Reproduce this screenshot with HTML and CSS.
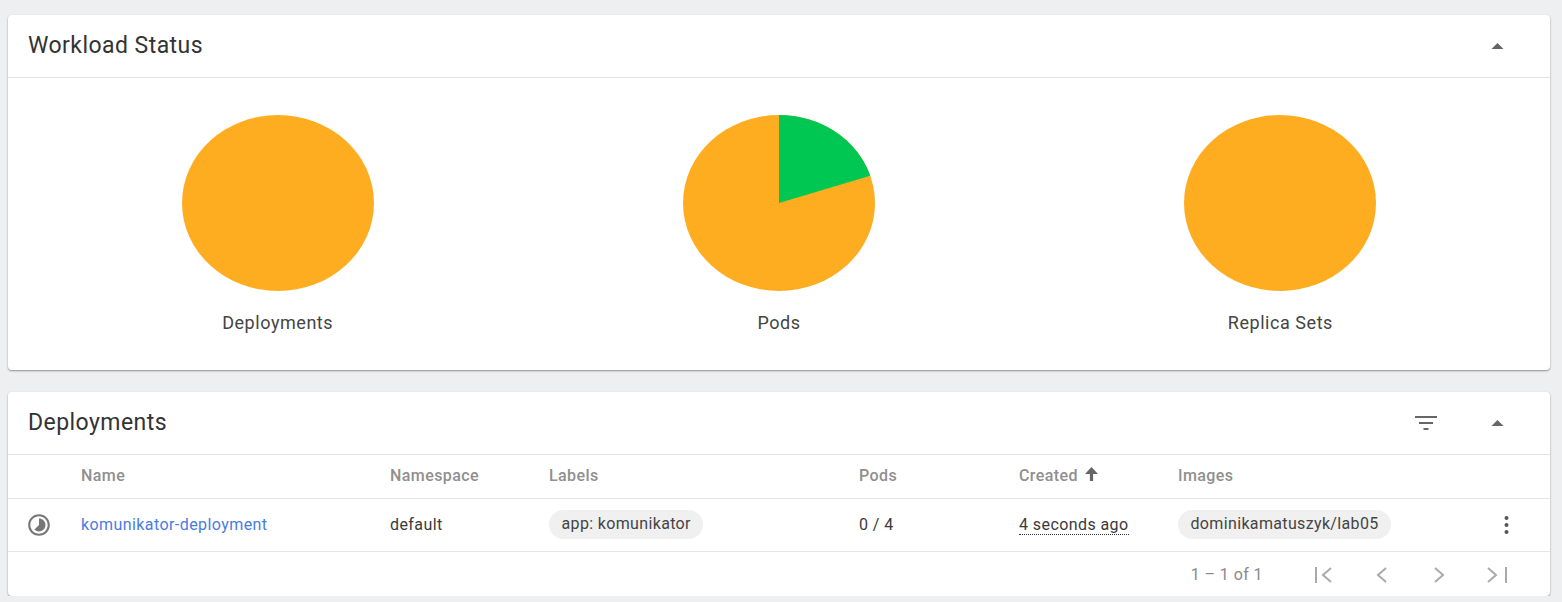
FILE: index.html
```html
<!DOCTYPE html>
<html lang="en">
<head>
    <meta charset="UTF-8">
    <meta name="viewport" content="width=device-width, initial-scale=1.0">
    <title>Workloads</title>
    <link rel="stylesheet" href="styles.css">
</head>
<body>
    <section class="card card-status">
        <header class="card-header">
            <h2 class="card-title">Workload Status</h2>
            <div class="card-actions">
                <svg class="icon-caret" viewBox="0 0 14 7"><path d="M7 0 14 7H0z"/></svg>
            </div>
        </header>
        <div class="charts">
            <figure class="chart">
                <svg class="pie" viewBox="-96 -88 192 176"><ellipse rx="96" ry="88" fill="#ffad20"/></svg>
                <figcaption class="chart-label">Deployments</figcaption>
            </figure>
            <figure class="chart">
                <svg class="pie" viewBox="-96 -88 192 176">
                    <ellipse rx="96" ry="88" fill="#ffad20"/>
                    <path d="M0 0V-88A96 88 0 0 1 91.3 -27.2Z" fill="#00c752"/>
                </svg>
                <figcaption class="chart-label">Pods</figcaption>
            </figure>
            <figure class="chart">
                <svg class="pie" viewBox="-96 -88 192 176"><ellipse rx="96" ry="88" fill="#ffad20"/></svg>
                <figcaption class="chart-label">Replica Sets</figcaption>
            </figure>
        </div>
    </section>

    <section class="card card-deployments">
        <header class="card-header">
            <h2 class="card-title">Deployments</h2>
            <div class="card-actions">
                <svg class="icon-filter" viewBox="0 0 22 14"><path d="M0 0h22v2H0zM4 6h14v2H4zM8.500 12h5v2h-5z"/></svg>
                <svg class="icon-caret" viewBox="0 0 14 7"><path d="M7 0 14 7H0z"/></svg>
            </div>
        </header>
        <table class="table">
            <colgroup>
                <col class="col-icon"><col class="col-name"><col class="col-ns"><col class="col-labels">
                <col class="col-pods"><col class="col-created"><col class="col-images"><col>
            </colgroup>
            <thead>
                <tr>
                    <th></th>
                    <th>Name</th>
                    <th>Namespace</th>
                    <th>Labels</th>
                    <th>Pods</th>
                    <th>Created <svg class="icon-sort" viewBox="0 0 12 13"><path d="M6 0 12 6.500H7.500V13h-3V6.500H0z"/></svg></th>
                    <th>Images</th>
                    <th></th>
                </tr>
            </thead>
            <tbody>
                <tr>
                    <td class="cell-icon">
                        <svg class="icon-status" viewBox="0 0 24 24">
                            <path d="M16.240 7.760C15.070 6.590 13.540 6 12 6v6l-4.240 4.240c2.340 2.340 6.140 2.340 8.490 0 2.340-2.340 2.340-6.140-.01-8.480zM12 2C6.480 2 2 6.480 2 12s4.480 10 10 10 10-4.480 10-10S17.520 2 12 2zm0 18c-4.420 0-8-3.580-8-8s3.580-8 8-8 8 3.580 8 8-3.580 8-8 8z"/>
                        </svg>
                    </td>
                    <td><a class="link" href="#">komunikator-deployment</a></td>
                    <td>default</td>
                    <td><span class="chip">app: komunikator</span></td>
                    <td>0 / 4</td>
                    <td><span class="age">4 seconds ago</span></td>
                    <td><span class="chip">dominikamatuszyk/lab05</span></td>
                    <td class="cell-menu">
                        <svg class="icon-menu" viewBox="0 0 4 18"><circle cx="2" cy="2" r="2"/><circle cx="2" cy="9" r="2"/><circle cx="2" cy="16" r="2"/></svg>
                    </td>
                </tr>
            </tbody>
        </table>
        <footer class="paginator">
            <span class="range">1 – 1 of 1</span>
            <svg class="icon-page" viewBox="0 0 22 18"><path d="M2 1v16M17 2 9 9l8 7"/></svg>
            <svg class="icon-page" viewBox="0 0 22 18"><path d="M15 2 7 9l8 7"/></svg>
            <svg class="icon-page" viewBox="0 0 22 18"><path d="M7 2l8 7-8 7"/></svg>
            <svg class="icon-page" viewBox="0 0 22 18"><path d="M3 2l8 7-8 7M21 1v16"/></svg>
        </footer>
    </section>
</body>
</html>
```

FILE: styles.css
```css
* {
    box-sizing: border-box;
}
body {
    margin: 0;
    padding: 15px 12px 0 8px;
    background: #edeff1;
    font-family: Roboto, sans-serif;
    color: #3a3a3a;
    overflow: hidden;
}
.card {
    background: #fff;
    border-radius: 4px;
    box-shadow: 0 1px 2px rgba(0, 0, 0, 0.4);
}
.card-status {
    height: 355px;
    margin-bottom: 22px;
}
.card-deployments {
    height: 204px;
}
.card-header {
    display: flex;
    align-items: center;
    justify-content: space-between;
    height: 63px;
    padding: 0 46px 1px 20px;
    border-bottom: 1.500px solid #e2e2e2;
}
.card-title {
    margin: 0;
    font-size: 23px;
    font-weight: 400;
    letter-spacing: 0.45px;
    color: #333;
}
.card-actions {
    display: flex;
    align-items: center;
    gap: 54px;
}
.icon-caret {
    width: 13px;
    height: 6px;
    margin-top: 1px;
    fill: #666;
}
.icon-filter {
    width: 22px;
    height: 14px;
    fill: #666;
}

.charts {
    display: grid;
    grid-template-columns: repeat(3, 1fr);
    padding: 37px 19px 0;
}
.chart {
    display: flex;
    flex-direction: column;
    align-items: center;
    margin: 0;
}
.pie {
    width: 192px;
    height: 176px;
}
.chart-label {
    margin-top: 22px;
    font-size: 18px;
    line-height: 20px;
    letter-spacing: 0.55px;
    color: #444;
}

.table {
    width: 100%;
    border-collapse: collapse;
    table-layout: fixed;
    font-size: 16px;
    letter-spacing: 0.42px;
}
.col-icon { width: 73px; }
.col-name { width: 309px; }
.col-ns { width: 159px; }
.col-labels { width: 310px; }
.col-pods { width: 160px; }
.col-created { width: 159px; }
.col-images { width: 300px; }
th {
    height: 43px;
    padding: 0 0 2px;
    text-align: left;
    font-weight: 500;
    color: #8f8f8f;
    border-bottom: 1.500px solid #e6e6e6;
}
td {
    height: 53px;
    padding: 0;
    color: #3a3a3a;
    border-bottom: 1.500px solid #e6e6e6;
}
.cell-icon {
    padding-left: 18px;
}
.icon-status {
    display: block;
    width: 26px;
    height: 26px;
    fill: #777;
}
.icon-sort {
    width: 13px;
    height: 14px;
    margin-left: 3px;
    fill: #666;
}
.link {
    color: #4a7be0;
    text-decoration: none;
}
.chip {
    display: inline-block;
    height: 29px;
    padding: 0 12.500px;
    line-height: 27px;
    letter-spacing: 0.35px;
    border-radius: 15px;
    background: #f0f0f0;
    color: #444;
}
.age {
    border-bottom: 1px dotted #333;
}
.cell-menu {
    padding-left: 26px;
}
.icon-menu {
    display: block;
    width: 5px;
    height: 18px;
    fill: #555;
}

.paginator {
    display: flex;
    align-items: center;
    justify-content: flex-end;
    gap: 35px;
    height: 44px;
    padding: 2px 43px 0 0;
    font-size: 16px;
    letter-spacing: 0.42px;
    color: #8a8a8a;
}
.range {
    margin-right: 16px;
}
.icon-page {
    width: 22px;
    height: 18px;
    fill: none;
    stroke: #aaa;
    stroke-width: 2;
}
```
